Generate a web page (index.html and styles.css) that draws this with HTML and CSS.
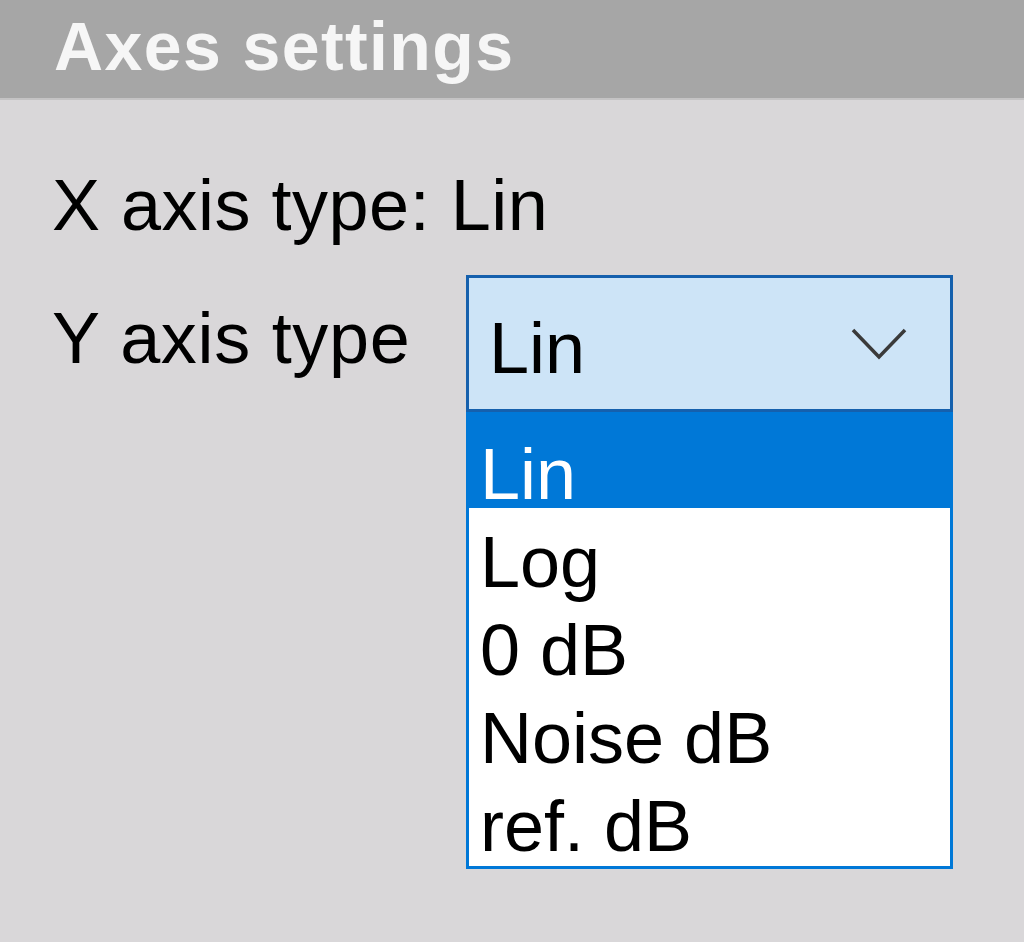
FILE: index.html
```html
<!DOCTYPE html>
<html lang="en">
<head>
  <meta charset="UTF-8">
  <meta name="viewport" content="width=device-width, initial-scale=1.0">
  <title>Axes settings</title>
  <link rel="stylesheet" href="styles.css">
</head>
<body>
  <div class="header">Axes settings</div>

  <div class="content">
    <div class="xaxis">X axis type: Lin</div>

    <div class="yaxis-row">
      <div class="yaxis-label">Y axis type</div>

      <div class="combo">
        <div class="combo-box">
          <span class="combo-value">Lin</span>
          <svg class="chevron" width="56" height="34" viewBox="0 0 56 34">
            <path d="M2 3 L28 30 L54 3" fill="none" stroke="#3a3a3a" stroke-width="3.5"/>
          </svg>
        </div>
        <!-- open dropdown -->
        <ul class="combo-list">
          <li class="selected">Lin</li>
          <li>Log</li>
          <li>0 dB</li>
          <li>Noise dB</li>
          <li>ref. dB</li>
        </ul>
      </div>
    </div>
  </div>
</body>
</html>
```

FILE: styles.css
```css
body {
  margin: 0;
  background-color: #d9d7d9;
  color: #000;
  font-family: 'Liberation Sans', Arial, sans-serif;
  font-size: 72px;
}

.header {
  height: 98px;
  line-height: 93px;
  padding-left: 54px;
  background-color: #a6a6a6;
  border-bottom: 2px solid #c4c3c4;
  color: #f6f6f6;
  font-size: 68px;
  font-weight: bold;
  letter-spacing: 1.4px;
}

.content {
  padding-left: 52px;
}

.xaxis {
  margin-top: 65px;
  line-height: 80px;
  letter-spacing: 0.5px;
}

.yaxis-row {
  display: flex;
  align-items: flex-start;
  margin-top: 30px;
}

.yaxis-label {
  width: 414px;
  margin-top: 23px;
  line-height: 80px;
  letter-spacing: 0.7px;
}

.combo {
  display: flex;
  flex-direction: column;
  width: 487px;
}

.combo-box {
  display: flex;
  align-items: flex-start;
  height: 137px;
  box-sizing: border-box;
  border: 3px solid #1560ad;
  background-color: #cde4f7;
  padding: 0 43px 0 20px;
}

.combo-value {
  margin-top: 30px;
  line-height: 80px;
}

.chevron {
  margin-left: auto;
  margin-top: 49px;
}

.combo-list {
  margin: 0;
  padding: 0 0 6px;
  list-style: none;
  background-color: #fff;
  border: 3px solid #0078d7;
  border-top: none;
}

.combo-list li {
  height: 88px;
  box-sizing: border-box;
  padding: 20px 0 0 11px;
  line-height: 68px;
}

.combo-list li.selected {
  height: 96px;
  padding-top: 28px;
  background-color: #0078d7;
  color: #fff;
}
```
